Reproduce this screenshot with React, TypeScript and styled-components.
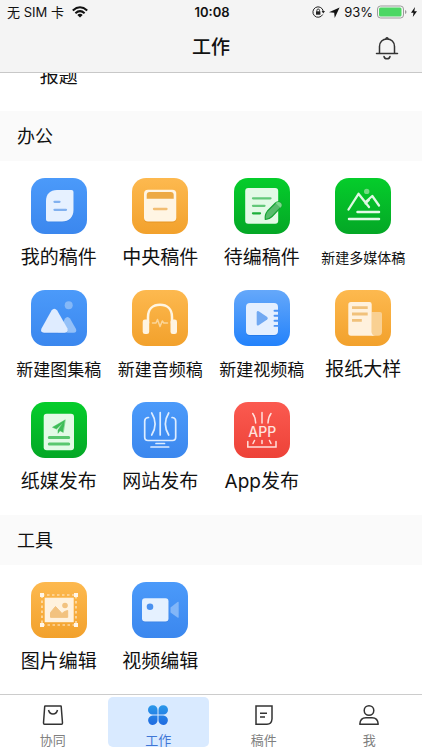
import React from 'react';
import styled, { createGlobalStyle } from 'styled-components';

const GlobalStyle = createGlobalStyle`
  * { box-sizing: border-box; }
  body {
    margin: 0;
    background: #fff;
    color: #111;
    font-family: Inter, "Noto Sans CJK SC", sans-serif;
  }
  button { font: inherit; color: inherit; border: 0; padding: 0; background: none; cursor: pointer; }
`;

const Page = styled.div`
  display: flex;
  flex-direction: column;
  height: 100vh;
  overflow: hidden;
`;

const Header = styled.header`
  flex: none;
  background: #f4f4f4;
  border-bottom: 1px solid #c8c8c8;
`;

const StatusBar = styled.div`
  display: grid;
  grid-template-columns: 1fr auto 1fr;
  align-items: center;
  height: 24px;
  padding: 0 5px 0 7px;
  font-size: 13px;
  line-height: 24px;
`;

const StatusGroup = styled.div<{ $end?: boolean }>`
  display: flex;
  align-items: center;
  gap: ${p => (p.$end ? 4 : 8)}px;
  justify-content: ${p => (p.$end ? 'flex-end' : 'flex-start')};
  white-space: nowrap;
  svg { flex: none; }
`;

const Clock = styled.time`
  font-weight: 600;
`;

const TitleBar = styled.div`
  display: grid;
  grid-template-columns: 1fr auto 1fr;
  align-items: center;
  height: 48px;
  padding: 0 23px;
`;

const Title = styled.h1`
  grid-column: 2;
  margin: 0;
  font-size: 19px;
  line-height: 28px;
  font-weight: 500;
`;

const BellButton = styled.button`
  justify-self: end;
  display: flex;
`;

const Content = styled.main`
  flex: 1;
  min-height: 0;
  overflow: hidden;
`;

const ScrolledRow = styled.div`
  display: grid;
  grid-template-columns: repeat(4, 1fr);
  align-content: end;
  height: 38px;
  padding: 0 8px 20px;
  overflow: hidden;
`;

const SectionTitle = styled.h2`
  margin: 0;
  padding: 0 17px;
  height: 50px;
  background: #fafafa;
  font-size: 18px;
  line-height: 52px;
  font-weight: 400;
`;

const Grid = styled.div`
  display: grid;
  grid-template-columns: repeat(4, 1fr);
  padding: 0 8px 18px;
`;

const Entry = styled.button`
  display: flex;
  flex-direction: column;
  align-items: center;
  gap: 10px;
  height: 112px;
  padding-top: 17px;
`;

type Tone = 'blue' | 'orange' | 'green' | 'sky' | 'red';

const tones: Record<Tone, string> = {
  blue: 'linear-gradient(#4b9afa, #3b87ee)',
  orange: 'linear-gradient(#fdb94f, #f2a12c)',
  green: 'linear-gradient(#05cd2b, #04a726)',
  sky: 'linear-gradient(#65a8fa, #2382fb)',
  red: 'linear-gradient(#fb5a50, #ed4238)',
};

const Tile = styled.span<{ $tone: Tone }>`
  display: block;
  width: 56px;
  height: 56px;
  border-radius: 14px;
  background: ${p => tones[p.$tone]};
  svg { display: block; }
`;

const Label = styled.span<{ $size?: number }>`
  font-size: ${p => p.$size ?? 19}px;
  line-height: 28px;
  text-align: center;
  white-space: nowrap;
`;

const TabBar = styled.nav`
  flex: none;
  display: grid;
  grid-template-columns: repeat(4, 1fr);
  height: 56px;
  border-top: 1px solid #ccc;
`;

const Tab = styled.button<{ $active?: boolean }>`
  display: flex;
  flex-direction: column;
  align-items: center;
  gap: 7px;
  margin: 2px 2px 3px;
  padding-top: 7px;
  border-radius: 5px;
  font-size: 13px;
  line-height: 14px;
  color: ${p => (p.$active ? '#3f76d6' : '#808080')};
  background: ${p => (p.$active ? '#d9eaff' : 'transparent')};
  svg { flex: none; }
`;

const Art = ({ children }: { children: React.ReactNode }) => (
  <svg width="56" height="56" viewBox="0 0 56 56" fill="none" strokeLinecap="round" strokeLinejoin="round" aria-hidden="true">
    {children}
  </svg>
);

const art = {
  mine: (
    <Art>
      <path d="M15 23C15 16 19 12 26 12H40.500Q42.500 12 42.500 14V32C42.500 39 38 43.500 31 43.500H17Q15 43.500 15 41.500Z" fill="#2f78dc" opacity=".45" transform="translate(0 .7)" />
      <path d="M15 23C15 16 19 12 26 12H40.500Q42.500 12 42.500 14V32C42.500 39 38 43.500 31 43.500H17Q15 43.500 15 41.500Z" fill="#e6f1ff" />
      <path d="M23.500 23.800H28.500M23.500 31.800H35" stroke="#81b1ef" strokeWidth="2.300" />
    </Art>
  ),
  central: (
    <Art>
      <rect x="12" y="12.500" width="32.300" height="32" rx="4" fill="#d98512" opacity=".5" />
      <rect x="12" y="11.700" width="32.300" height="31.800" rx="4" fill="#fff5e4" />
      <path d="M14.700 20.700V17Q14.700 14 17.700 14H38.700Q41.700 14 41.700 17V20.700Z" fill="#eda944" />
      <path d="M22 31H34.500" stroke="#f2bd72" strokeWidth="2.300" />
    </Art>
  ),
  edit: (
    <Art>
      <rect x="11.200" y="10" width="33" height="35.700" rx="3" fill="#e3fae6" />
      <path d="M19 20.300H36.500M19 27.800H30.500" stroke="#62c878" strokeWidth="2.300" />
      <path d="M19 35.300H26" stroke="#1daf3a" strokeWidth="2.300" />
      <path d="M31.300 41.500C30.700 37 31.500 35.500 33.500 33L41.500 25Q44.500 22.800 46.800 25Q48.800 27 46.500 29.700L38 38.500C36 40.500 34.500 41.500 31.300 41.500Z" fill="#58bb6c" stroke="#15a333" strokeWidth="1.200" />
      <path d="M41.500 25Q44.500 22.800 46.800 25Q48.800 27 46.500 29.700Z" fill="#7bd98b" />
    </Art>
  ),
  media: (
    <Art>
      <circle cx="31.700" cy="13.400" r="2.700" fill="#74da84" />
      <path d="M13.500 31.500L23.500 15.800L34 29M30.500 24L37.300 18L44 27.500" stroke="#dff8e3" strokeWidth="2.300" />
      <path d="M30.500 25.500L34 22" stroke="#dff8e3" strokeWidth="2" />
      <path d="M22.500 34H44M14 41H44" stroke="#e5fae8" strokeWidth="2.500" />
    </Art>
  ),
  gallery: (
    <Art>
      <circle cx="37.700" cy="15.200" r="4" fill="#85b8f7" />
      <path d="M34 28.500Q36.500 25.500 39 28.500L45 39Q46.200 42.500 42.500 42.700H27Z" fill="#93c0f8" />
      <path d="M20.500 20.500Q23.300 17 26.200 20.500L36.500 38.500Q37.800 42.500 33.500 42.700H13Q8.800 42.500 10.500 38.500Z" fill="#2e76dd" opacity=".4" transform="translate(0 .8)" />
      <path d="M20.500 20.500Q23.300 17 26.200 20.500L36.500 38.500Q37.800 42.500 33.500 42.700H13Q8.800 42.500 10.500 38.500Z" fill="#dfecff" />
    </Art>
  ),
  audio: (
    <Art>
      <path d="M16 33V27C16 19 21 14.800 28 14.800S40 19 40 27V33" stroke="#fff5e2" strokeWidth="2.500" />
      <rect x="10.700" y="29.500" width="6.500" height="14.500" rx="2.300" fill="#fff4e0" />
      <rect x="38.500" y="29.500" width="6.500" height="14.500" rx="2.300" fill="#fff4e0" />
      <path d="M20.500 33H24L25.500 29.500L28 36.500L30.300 31L31.800 33H35.500" stroke="#fbd699" strokeWidth="1.500" />
    </Art>
  ),
  video: (
    <Art>
      <rect x="12" y="14" width="32" height="32" rx="4" fill="#1668d8" opacity=".45" />
      <rect x="12" y="13" width="32" height="32" rx="4" fill="#e4efff" />
      <path d="M22.700 22.500Q22.700 20.300 24.700 21.300L33.200 27Q34.500 28.300 33.200 29.600L24.700 35.300Q22.700 36.300 22.700 34Z" fill="#70a8f2" />
      <path d="M40.500 20.700H45M40.500 25.700H45M40.500 30.700H45M40.500 35.900H45" stroke="#4b93f5" strokeWidth="1.900" />
    </Art>
  ),
  newspaper: (
    <Art>
      <path d="M36.700 22H45Q47 22 47 24V42Q47 45.700 43 45.700H36.700Z" fill="#f9d092" />
      <path d="M16 12H34.500Q36.700 12 36.700 14.200V42Q36.700 45.700 40.500 45.700H16Q13.300 45.700 13.300 43V14.700Q13.300 12 16 12Z" fill="#fff1dd" />
      <path d="M17 17.600H32.700M17 24H32.700M17 30.300H26.800" stroke="#f1c17b" strokeWidth="2.800" strokeLinecap="butt" />
    </Art>
  ),
  paper: (
    <Art>
      <rect x="12.700" y="11.700" width="30.300" height="36.500" rx="3" fill="#e3fae6" />
      <path d="M34 18L21.500 25.300L25.500 27L32 20.800L27 28V31.300L29 28.700L32 30.300Z" fill="#3ebd58" stroke="#3ebd58" strokeWidth=".5" />
      <path d="M18.300 35.600H37.700M18.300 42H37.700" stroke="#59c76e" strokeWidth="3" />
    </Art>
  ),
  website: (
    <Art>
      <path d="M16.500 15.500H16Q12.700 16 12.700 19V35Q12.700 38.500 16 38.500H40.500Q43.700 38.500 43.700 35V19Q43.700 16 40.500 15.500H40" stroke="#deedff" strokeWidth="1.700" />
      <path d="M19.700 11Q26.500 22 19.700 33M28.200 10.500V33M36.700 11Q30 22 36.700 33" stroke="#deedff" strokeWidth="1.700" />
      <path d="M24 41.500H32.500M19 45H36.700" stroke="#deedff" strokeWidth="1.700" />
    </Art>
  ),
  app: (
    <Art>
      <path d="M18.700 11.500Q21.500 15 21.700 21M28 10.500V21M37 11.500Q34.200 15 34 21" stroke="#ffe0dc" strokeWidth="1.500" />
      <text x="28.200" y="35.200" textAnchor="middle" fontFamily="Inter, sans-serif" fontSize="14" fontWeight="500" fill="#ffe2de">APP</text>
      <path d="M20.500 38.500L19 41.500M28 38.500V41.500M35.500 38.500L37 41.500M13.800 39.500V45H42V39.500" stroke="#ffe0dc" strokeWidth="1.500" strokeLinejoin="miter" />
    </Art>
  ),
  picture: (
    <Art>
      <rect x="11" y="13" width="34" height="30" stroke="#fff0d8" strokeWidth="1.200" strokeDasharray="2.500 2.500" strokeLinecap="butt" />
      <rect x="13.700" y="15.700" width="29" height="24.500" fill="#fff2de" />
      <path d="M9 11h4v4H9zM43 11h4v4h-4zM9 41h4v4H9zM43 41h4v4h-4z" fill="#fff6e8" />
      <path d="M19.500 35V30.500L24.500 24.500L31 31.500L33.500 29.500L36.700 28.500V35Z" fill="#f2c27f" stroke="#f2c27f" />
      <circle cx="34" cy="23.500" r="2.800" fill="#f2c27f" />
    </Art>
  ),
  camera: (
    <Art>
      <rect x="10" y="17" width="26.500" height="23.300" rx="3" fill="#276fd7" opacity=".5" />
      <rect x="10" y="16.300" width="26.500" height="23.200" rx="3" fill="#e5f1ff" />
      <circle cx="18" cy="24.800" r="3.300" fill="#4a91ef" />
      <path d="M38.500 25.500L45.500 20Q46.700 19.300 46.700 20.500V35Q46.700 36.300 45.500 35.500L38.500 30.500Z" fill="#82b6f8" />
    </Art>
  ),
};

interface Item { label: string; tone: Tone; icon: React.ReactNode; size?: number }

const office: Item[] = [
  { label: '我的稿件', tone: 'blue', icon: art.mine },
  { label: '中央稿件', tone: 'orange', icon: art.central },
  { label: '待编稿件', tone: 'green', icon: art.edit },
  { label: '新建多媒体稿', tone: 'green', icon: art.media, size: 14 },
  { label: '新建图集稿', tone: 'blue', icon: art.gallery, size: 17 },
  { label: '新建音频稿', tone: 'orange', icon: art.audio, size: 17 },
  { label: '新建视频稿', tone: 'sky', icon: art.video, size: 17 },
  { label: '报纸大样', tone: 'orange', icon: art.newspaper },
  { label: '纸媒发布', tone: 'green', icon: art.paper },
  { label: '网站发布', tone: 'blue', icon: art.website },
  { label: 'App发布', tone: 'red', icon: art.app },
];

const tools: Item[] = [
  { label: '图片编辑', tone: 'orange', icon: art.picture },
  { label: '视频编辑', tone: 'blue', icon: art.camera },
];

const Entries = ({ items }: { items: Item[] }) => (
  <Grid>
    {items.map(item => (
      <Entry key={item.label} type="button">
        <Tile $tone={item.tone}>{item.icon}</Tile>
        <Label $size={item.size}>{item.label}</Label>
      </Entry>
    ))}
  </Grid>
);

const WifiIcon = () => (
  <svg width="16" height="12" viewBox="0 0 16 12" fill="none" stroke="#111" strokeWidth="2" aria-hidden="true">
    <path d="M.8 4.400Q8-2 15.200 4.400M3.400 7.200Q8 3 12.600 7.200" />
    <path d="M5.300 8.900Q8 6.600 10.700 8.900L8 11.600Z" fill="#111" stroke="none" />
  </svg>
);

const LockIcon = () => (
  <svg width="13" height="12" viewBox="0 0 13 12" fill="none" stroke="#222" aria-hidden="true">
    <path d="M10.700 8.500A5.200 5.200 0 1 1 11.200 5" />
    <path d="M9.600 5H13L11.300 7.500Z" fill="#222" stroke="none" />
    <rect x="4" y="5.300" width="4.400" height="3.400" fill="#222" stroke="none" />
    <path d="M4.900 5.500V4.400Q4.900 3 6.200 3T7.500 4.400V5.500" strokeWidth=".9" />
  </svg>
);

const ArrowIcon = () => (
  <svg width="11" height="11" viewBox="0 0 11 11" fill="#111" aria-hidden="true">
    <path d="M10.600.4L0 5.300L5.200 5.800L5.700 11Z" />
  </svg>
);

const BatteryIcon = () => (
  <svg width="30" height="14" viewBox="0 0 30 14" fill="none" aria-hidden="true">
    <rect x=".5" y="1" width="26" height="12" rx="3" stroke="#9b9b9b" />
    <rect x="2" y="2.500" width="22.500" height="9" rx="1.500" fill="#4cd764" />
    <path d="M28 5Q29.500 5.300 29.500 7T28 9Z" fill="#9b9b9b" />
  </svg>
);

const BoltIcon = () => (
  <svg width="6" height="10" viewBox="0 0 6 10" fill="#111" aria-hidden="true">
    <path d="M4 0L0 5.700H2.500L1.800 10L6 4.200H3.300Z" />
  </svg>
);

const BellIcon = () => (
  <svg width="24" height="24" viewBox="0 0 24 24" fill="none" stroke="#333" strokeWidth="1.500" strokeLinecap="round" aria-hidden="true">
    <path d="M1.500 17.500H22.500M4.500 17V10.500C4.500 6 7.700 3 12 3S19.500 6 19.500 10.500V17M9 20.500Q9.500 22.800 12 22.800T15 20.500" />
    <path d="M11 2.500Q12 1 13 2.500" />
  </svg>
);

const tabIcon = { width: 22, height: 22, viewBox: '0 0 22 22', fill: 'none', stroke: '#333', strokeWidth: 1.5, 'aria-hidden': true } as const;

const tabs = [
  {
    label: '协同',
    icon: (
      <svg {...tabIcon} strokeLinejoin="round">
        <path d="M3.200 2H18.800Q19.200 2 19.200 2.500L20.500 19Q20.500 20.300 19.500 20.300H2.500Q1.500 20.300 1.500 19L2.700 2.500Q2.700 2 3.200 2ZM6.500 6Q7.500 10 11 10T15.500 6" />
      </svg>
    ),
  },
  {
    label: '工作',
    active: true,
    icon: (
      <svg {...tabIcon} stroke="none">
        <defs>
          <linearGradient id="clover" x1="0" y1="0" x2="0" y2="22" gradientUnits="userSpaceOnUse">
            <stop stopColor="#2b9bea" />
            <stop offset="1" stopColor="#1f68e0" />
          </linearGradient>
        </defs>
        <path fill="url(#clover)" d="M5.700 1.200A4.600 4.600 0 0 1 10.500 5.900V10.600H5.700A4.700 4.700 0 0 1 5.700 1.200ZM16.300 1.200A4.700 4.700 0 0 1 16.300 10.600H11.500V5.900A4.600 4.600 0 0 1 16.300 1.200ZM5.700 11.600H10.500V16.300A4.700 4.700 0 1 1 5.700 11.600ZM11.500 11.600H16.300A4.700 4.700 0 1 1 11.500 16.300Z" />
      </svg>
    ),
  },
  {
    label: '稿件',
    icon: (
      <svg {...tabIcon}>
        <path d="M3 2H19V15Q18.500 20.300 14 20.300H3ZM7 9.300H14M7 13H12" />
      </svg>
    ),
  },
  {
    label: '我',
    icon: (
      <svg {...tabIcon} strokeLinejoin="round">
        <circle cx="11" cy="6.500" r="4.800" />
        <path d="M1.800 20.300C2 15.500 5 13.700 8 13.700H14C17 13.700 20 15.500 20.200 20.300Z" />
      </svg>
    ),
  },
];

export default function App() {
  return (
    <Page>
      <GlobalStyle />
      <Header>
        <StatusBar>
          <StatusGroup>
            <span>无 SIM 卡</span>
            <WifiIcon />
          </StatusGroup>
          <Clock>10:08</Clock>
          <StatusGroup $end>
            <LockIcon />
            <ArrowIcon />
            <span>93%</span>
            <BatteryIcon />
            <BoltIcon />
          </StatusGroup>
        </StatusBar>
        <TitleBar>
          <Title>工作</Title>
          <BellButton type="button" aria-label="通知"><BellIcon /></BellButton>
        </TitleBar>
      </Header>
      <Content>
        <ScrolledRow>
          <Label>报题</Label>
        </ScrolledRow>
        <SectionTitle>办公</SectionTitle>
        <Entries items={office} />
        <SectionTitle>工具</SectionTitle>
        <Entries items={tools} />
      </Content>
      <TabBar>
        {tabs.map(tab => (
          <Tab key={tab.label} type="button" $active={tab.active} aria-current={tab.active ? 'page' : undefined}>
            {tab.icon}
            {tab.label}
          </Tab>
        ))}
      </TabBar>
    </Page>
  );
}
